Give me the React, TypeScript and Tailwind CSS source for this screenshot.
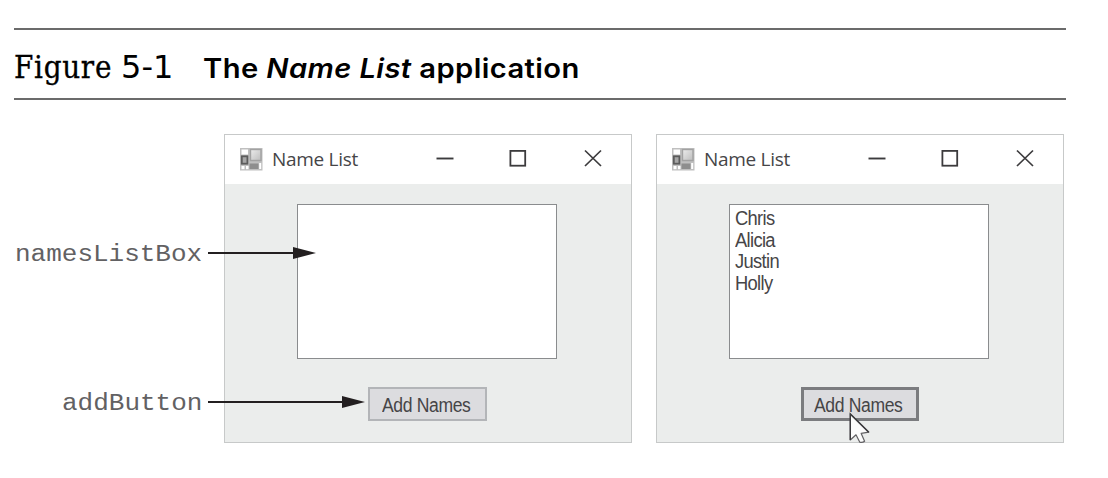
import type { ReactNode } from 'react';

function FormIcon() {
  return (
    <svg className="h-[23px] w-[23px] shrink-0" viewBox="0 0 23 23">
      <defs>
        <linearGradient id="pane" x1="0" y1="0" x2="1" y2="1">
          <stop offset="0" stopColor="#ececec" />
          <stop offset="1" stopColor="#bcbcbc" />
        </linearGradient>
      </defs>
      <rect x="0" y="0" width="22.5" height="22.5" fill="#bfbfbf" />
      <rect x="1.5" y="1.5" width="6.5" height="5" fill="#fff" />
      <rect x="10.5" y="1.5" width="10.5" height="11" fill="url(#pane)" stroke="#a2a2a2" strokeWidth="1.4" />
      <rect x="1.8" y="8.3" width="5.6" height="7.4" fill="#a6a6a6" stroke="#5c5c5c" strokeWidth="1.8" />
      <rect x="1.5" y="18" width="3" height="3.2" fill="#fff" />
      <rect x="6" y="18" width="2.5" height="3.2" fill="#fff" />
      <rect x="9.5" y="15.5" width="9" height="5.5" fill="#8e8e8e" />
      <rect x="19.2" y="15" width="2" height="6" fill="#fff" />
    </svg>
  );
}

function WindowControls() {
  return (
    <svg className="mb-[3px] ml-auto h-5 w-[168px] shrink-0" viewBox="0 0 168 20" fill="none" stroke="#3c3b3d">
      <path d="M0.5 10.5H17.5" strokeWidth="1.9" />
      <rect x="74.4" y="2.9" width="14.8" height="14.8" strokeWidth="1.8" />
      <path d="M149 2.5L165 18M165 2.5L149 18" strokeWidth="1.7" />
    </svg>
  );
}

function Pointer() {
  return (
    <svg className="absolute left-[48px] top-[25px] h-[32px] w-[22px]" viewBox="0 0 22 32">
      <path
        d="M1.3 2V28L7 22.8L10.8 30.2Q13.5 31 15.6 29.2L12.2 21.4L19.8 20.2Z"
        fill="#fcfcfc"
        stroke="#626164"
        strokeWidth="1.2"
        strokeLinejoin="round"
      />
      <path d="M19.8 20.2L1.3 2V28" fill="none" stroke="#3c3b3e" strokeWidth="1.4" />
    </svg>
  );
}

function Arrow({ length }: { length: 108 | 157 }) {
  return (
    <svg className={length === 108 ? 'h-4 w-[108px] shrink-0' : 'h-4 w-[157px] shrink-0'} viewBox={`0 0 ${length} 16`}>
      <path d={`M0 8H${length - 20}`} stroke="#231f20" strokeWidth="1.8" />
      <path d={`M${length - 23} 2L${length} 8L${length - 23} 14Z`} fill="#231f20" />
    </svg>
  );
}

function AppWindow({ names, active }: { names: string[]; active?: boolean }) {
  const holder = active ? 'ml-[144px] w-[118px]' : 'ml-[143px] w-[119px]';
  const frame = active ? 'border-[3px] border-[#7b7c7f] pl-[10px]' : 'border-2 border-[#b3b5b8] pl-[12px]';
  return (
    <div className="flex h-[309px] w-[408px] shrink-0 flex-col border border-[#c7c9c9] bg-[#ebedec] font-['Open_Sans',sans-serif] text-[#464547]">
      <div className="flex h-[49px] shrink-0 items-center bg-white pb-px pl-[15px] pr-[27px]">
        <FormIcon />
        <div className="ml-[9px] text-[19px] tracking-[-0.3px]">Name List</div>
        <WindowControls />
      </div>
      <div className="ml-[72px] mt-[20px] h-[155px] w-[260px] shrink-0 border-[1.5px] border-[#8a8c8e] bg-white pl-[5px] pt-[3px] font-['Liberation_Sans',sans-serif] text-[19.5px] leading-[21.6px] tracking-[-0.7px]">
        {names.map((name) => (
          <div key={name} className="origin-left scale-x-[0.94]">
            {name}
          </div>
        ))}
      </div>
      <div className={`${holder} relative mt-[28px]`}>
        <div className={`${frame} flex h-[34px] items-center bg-[#dcdcdf] pt-px`}>
          <span className="origin-left scale-x-[0.9] whitespace-nowrap font-['Liberation_Sans',sans-serif] text-[19.5px] leading-5 tracking-[-0.4px]">
            Add Names
          </span>
        </div>
        {active && <Pointer />}
      </div>
    </div>
  );
}

function Callout({ children }: { children: ReactNode }) {
  return (
    <span className="origin-left scale-x-[1.13] font-['Liberation_Mono',monospace] text-[23px] leading-6 text-[#626163]">
      {children}
    </span>
  );
}

export default function App() {
  return (
    <main className="relative h-[478px] w-[1108px] overflow-hidden bg-white pl-[14px] pt-[28px]">
      <header className="flex h-[72px] w-[1052px] items-baseline border-y-2 border-[#6b6b6b] pt-[17px] text-black">
        <span className="w-[189px] shrink-0 whitespace-nowrap">
          <span className="font-['DejaVu_Serif_Condensed','DejaVu_Serif',serif] text-[31px] leading-10 tracking-[0.7px] [-webkit-text-stroke:0.3px_#000]">
            Figure
          </span>
          <span className="ml-[9px] font-['DejaVu_Sans',sans-serif] text-[32px] leading-10">5-1</span>
        </span>
        <h1 className="origin-left scale-x-[1.08] whitespace-nowrap font-['Inter',sans-serif] text-[27px] font-semibold leading-10 tracking-[0.38px]">
          The <em>Name List</em> application
        </h1>
      </header>
      <section className="ml-[210px] mt-[34px] flex gap-[24px]">
        <AppWindow names={[]} />
        <AppWindow names={['Chris', 'Alicia', 'Justin', 'Holly']} active />
      </section>
      <div className="absolute left-[15px] top-[241px] flex h-6 items-center">
        <div className="flex w-[193px] shrink-0 pt-[3px]">
          <Callout>namesListBox</Callout>
        </div>
        <Arrow length={108} />
      </div>
      <div className="absolute left-[62px] top-[390px] flex h-6 items-center">
        <div className="flex w-[146px] shrink-0 pt-[3px]">
          <Callout>addButton</Callout>
        </div>
        <Arrow length={157} />
      </div>
    </main>
  );
}
